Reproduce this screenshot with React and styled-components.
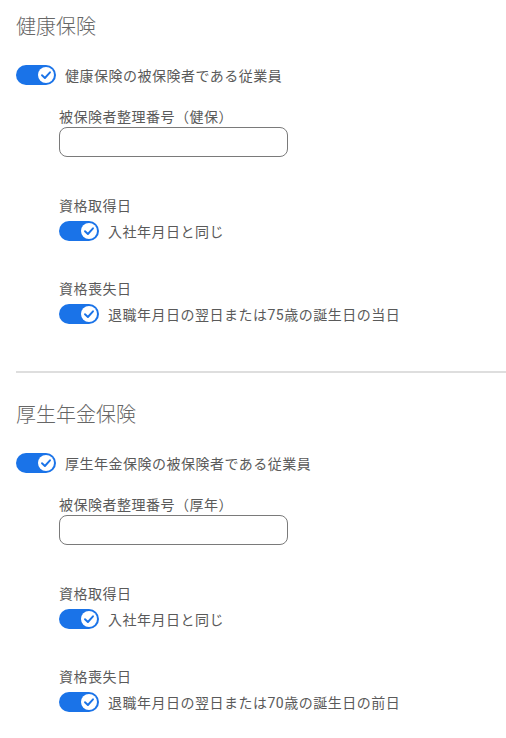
import React from 'react'
import styled, { createGlobalStyle } from 'styled-components'

const GlobalStyle = createGlobalStyle`
  body {
    margin: 0;
    background: #fff;
    font-family: Roboto, "Noto Sans CJK JP", sans-serif;
  }
`;

const Page = styled.div`
  width: 506px;
  padding-left: 16px;
  box-sizing: border-box;
`;

const Section = styled.section`
  display: flex;
  flex-direction: column;
  padding-top: ${({ $top }) => $top}px;
`;

const Heading = styled.h2`
  margin: 0 0 24px;
  font-size: 20px;
  line-height: 28px;
  font-weight: 300;
  color: #666;
`;

const Row = styled.label`
  display: flex;
  align-items: center;
  gap: 9px;
  height: 20px;
  font-size: 14px;
  letter-spacing: 0.5px;
  color: #5a5a5a;
`;

const Track = styled.span`
  flex: none;
  width: 40px;
  height: 20px;
  border-radius: 10px;
  background: #1a73e8;
  display: flex;
  align-items: center;
  justify-content: flex-end;
  padding-right: 2px;
  box-sizing: border-box;
`;

const Nested = styled.div`
  display: flex;
  flex-direction: column;
  padding-left: 43px;
`;

const Field = styled.div`
  display: flex;
  flex-direction: column;
  margin-top: ${({ $top }) => $top}px;
`;

const Label = styled.div`
  font-size: 14px;
  line-height: 20px;
  letter-spacing: 0.5px;
  color: #5a5a5a;
  margin-bottom: ${({ $gap }) => $gap}px;
`;

const Input = styled.input`
  width: 229px;
  height: 30px;
  box-sizing: border-box;
  border: 1px solid #7a7a7a;
  border-radius: 8px;
  outline: none;
  padding: 0 10px;
  font: inherit;
`;

const Divider = styled.hr`
  margin: 47px 0 0;
  border: none;
  height: 2px;
  background: #dedede;
`;

const Knob = () => (
  <svg width="16" height="16" viewBox="0 0 16 16">
    <circle cx="8" cy="8" r="8" fill="#fff" />
    <path d="M4 8.2 L6.9 11 L12 5.3" fill="none" stroke="#1a73e8" strokeWidth="1.9" strokeLinecap="round" strokeLinejoin="round" />
  </svg>
);

const Toggle = ({ children }) => (
  <Row>
    <Track><Knob /></Track>
    <span>{children}</span>
  </Row>
);

const InsuranceSection = ({ top, title, employee, numberLabel, lossText }) => (
  <Section $top={top}>
    <Heading>{title}</Heading>
    <Toggle>{employee}</Toggle>
    <Nested>
      <Field $top={22}>
        <Label $gap={0}>{numberLabel}</Label>
        <Input type="text" />
      </Field>
      <Field $top={39}>
        <Label $gap={5}>資格取得日</Label>
        <Toggle>入社年月日と同じ</Toggle>
      </Field>
      <Field $top={38}>
        <Label $gap={5}>資格喪失日</Label>
        <Toggle>{lossText}</Toggle>
      </Field>
    </Nested>
  </Section>
);

const App = () => (
  <Page>
    <GlobalStyle />
    <InsuranceSection
      top={13}
      title="健康保険"
      employee="健康保険の被保険者である従業員"
      numberLabel="被保険者整理番号（健保）"
      lossText="退職年月日の翌日または75歳の誕生日の当日"
    />
    <Divider />
    <InsuranceSection
      top={28}
      title="厚生年金保険"
      employee="厚生年金保険の被保険者である従業員"
      numberLabel="被保険者整理番号（厚年）"
      lossText="退職年月日の翌日または70歳の誕生日の前日"
    />
  </Page>
);

export default App
